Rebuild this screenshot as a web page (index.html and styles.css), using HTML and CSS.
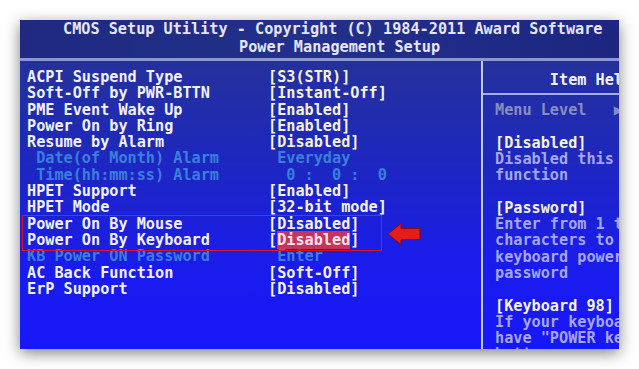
FILE: index.html
```html
<!DOCTYPE html>
<html>
<head>
<meta charset="utf-8">
<link rel="stylesheet" href="styles.css">
</head>
<body>
<div class="photo">
  <header class="head">
    <div class="t1">CMOS Setup Utility - Copyright (C) 1984-2011 Award Software</div>
    <div class="t2">Power Management Setup</div>
  </header>
  <div class="rule"></div>
  <div class="main">
    <section class="left">
      <div class="row"><span class="lbl">ACPI Suspend Type</span><span class="val">[S3(STR)]</span></div>
      <div class="row"><span class="lbl">Soft-Off by PWR-BTTN</span><span class="val">[Instant-Off]</span></div>
      <div class="row"><span class="lbl">PME Event Wake Up</span><span class="val">[Enabled]</span></div>
      <div class="row"><span class="lbl">Power On by Ring</span><span class="val">[Enabled]</span></div>
      <div class="row"><span class="lbl">Resume by Alarm</span><span class="val">[Disabled]</span></div>
      <div class="row dim"><span class="lbl"> Date(of Month) Alarm</span><span class="val"> Everyday</span></div>
      <div class="row dim"><span class="lbl"> Time(hh:mm:ss) Alarm</span><span class="val">  0 :  0 :  0</span></div>
      <div class="row"><span class="lbl">HPET Support</span><span class="val">[Enabled]</span></div>
      <div class="row"><span class="lbl">HPET Mode</span><span class="val">[32-bit mode]</span></div>
      <div class="hl">
        <div class="row"><span class="lbl">Power On By Mouse</span><span class="val">[Disabled]</span></div>
        <div class="row"><span class="lbl">Power On By Keyboard</span><span class="val">[<span class="sel">Disabled</span>]</span></div>
        <svg class="arrow" width="34" height="24" viewBox="0 0 34 24"><polygon points="1,12 14,1.5 14,6.5 33,6.5 33,17.5 14,17.5 14,22.5" fill="#e41c1c" stroke="#8c0a0a" stroke-width="1"/></svg>
      </div>
      <div class="row dim"><span class="lbl">KB Power ON Password</span><span class="val"> Enter</span></div>
      <div class="row"><span class="lbl">AC Back Function</span><span class="val">[Soft-Off]</span></div>
      <div class="row"><span class="lbl">ErP Support</span><span class="val">[Disabled]</span></div>
    </section>
    <div class="vline"></div>
    <aside class="right">
      <div class="rhead">      Item Help</div>
      <div class="rbody">
        <div class="ln grey">Menu Level   &#9654;</div>
        <div class="ln"> </div>
        <div class="ln hdr">[Disabled]</div>
        <div class="ln help">Disabled this</div>
        <div class="ln help">function</div>
        <div class="ln"> </div>
        <div class="ln hdr">[Password]</div>
        <div class="ln help">Enter from 1 to</div>
        <div class="ln help">characters to</div>
        <div class="ln help">keyboard power</div>
        <div class="ln help">password</div>
        <div class="ln"> </div>
        <div class="ln hdr">[Keyboard 98]</div>
        <div class="ln help">If your keyboard</div>
        <div class="ln help">have "POWER key"</div>
        <div class="ln help">button</div>
      </div>
    </aside>
  </div>
</div>
</body>
</html>
```

FILE: styles.css
```css
html, body {
  margin: 0;
  padding: 0;
  background: #ffffff;
}
body {
  width: 639px;
  height: 369px;
  overflow: hidden;
}
.photo {
  margin: 20px 0 0 20px;
  width: 599px;
  height: 329px;
  overflow: hidden;
  box-shadow: 0 4px 14px rgba(0, 0, 0, 0.5);
  font-family: "DejaVu Sans Mono", "Liberation Mono", monospace;
  font-weight: bold;
  font-size: 15.2px;
  display: flex;
  flex-direction: column;
  background: #1f2b88;
}
.head {
  flex: 0 0 38px;
  height: 38px;
  box-sizing: border-box;
  color: #e6e6f6;
  background: linear-gradient(to right, #1e2a80, #22308c 50%, #1c2680);
}
.head .t1, .head .t2 {
  white-space: pre;
  line-height: 18px;
}
.head .t1 {
  padding-left: 43px;
}
.head .t2 {
  padding-left: 219px;
}
.rule {
  flex: 0 0 3px;
  height: 3px;
  background: #8e94d6;
}
.main {
  flex: 1 1 0;
  min-height: 0;
  overflow: hidden;
  display: flex;
  background: linear-gradient(to bottom, #24319a 0%, #1d27c0 35%, #1a1ceb 70%, #1717fb 100%);
}
.left {
  width: 461px;
  padding: 8px 0 0 7px;
  box-sizing: border-box;
}
.row {
  display: grid;
  grid-template-columns: 241px auto;
  height: 16.3px;
  line-height: 16.3px;
  white-space: pre;
}
.lbl {
  color: #f2f2ff;
}
.val {
  color: #f6f2d6;
}
.dim .lbl, .dim .val {
  color: #3b7fdc;
}
.sel {
  background: #c6345c;
  color: #ffe6ee;
}
.hl {
  position: relative;
}
.hl::after {
  content: "";
  position: absolute;
  left: -5px;
  top: -1px;
  width: 360px;
  bottom: -3px;
  border: 1.5px solid #e2141c;
  box-sizing: border-box;
}
.arrow {
  position: absolute;
  left: 360px;
  top: 6px;
}
.vline {
  width: 2px;
  background: #c6caf2;
}
.right {
  flex: 1;
  min-width: 0;
  overflow: hidden;
}
.rhead {
  height: 34px;
  line-height: 32px;
  padding-top: 3px;
  box-sizing: border-box;
  white-space: pre;
  color: #f2f2ff;
  padding-left: 12px;
  border-bottom: 2px solid #a6ace6;
}
.rbody {
  padding: 7px 0 0 12px;
}
.ln {
  height: 16.3px;
  line-height: 16.3px;
  white-space: pre;
}
.grey {
  color: #8a8cc0;
}
.hdr {
  color: #f6f2d6;
}
.help {
  color: #a6a6ee;
}
```
